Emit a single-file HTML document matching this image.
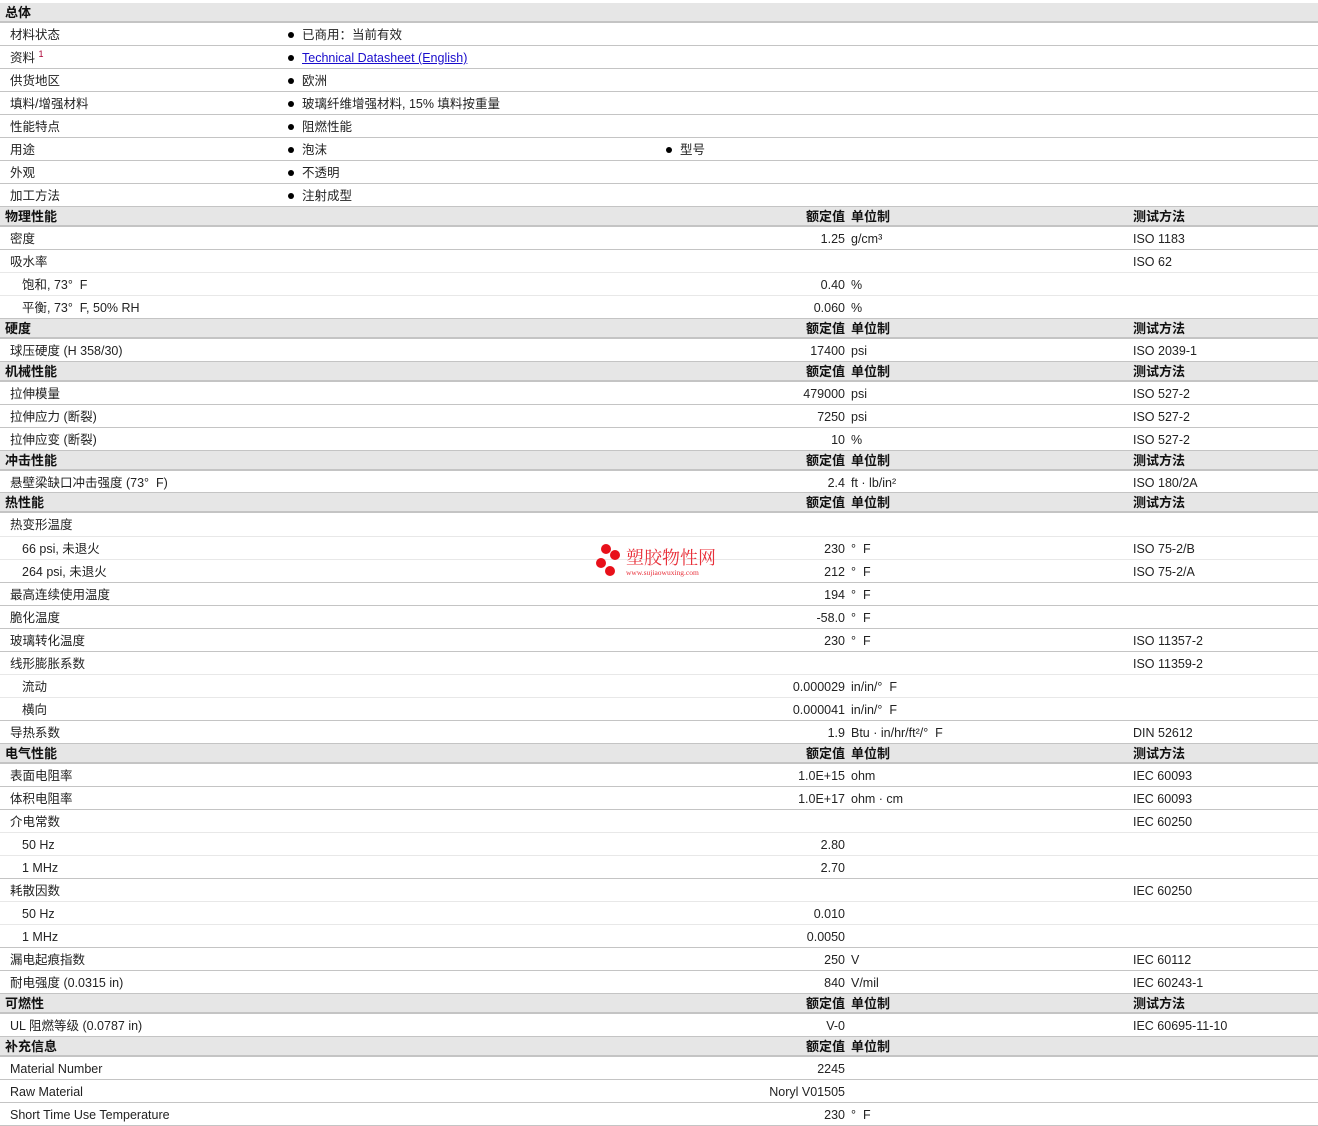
<!DOCTYPE html>
<html><head><meta charset="utf-8"><style>
*{margin:0;padding:0;box-sizing:border-box}
body{width:1318px;height:1126px;background:#fff;position:relative;overflow:hidden;font-family:"Liberation Sans","Noto Sans CJK SC",sans-serif;font-size:12.5px;color:#222}
.r{position:absolute;left:0;width:1318px;height:23px;border-bottom:1px solid #c4c4c4}
.r.s{border-bottom-color:#e8e8e8}
.h{position:absolute;left:0;width:1318px;height:20px;background:#e6e6e6;border-bottom:2px solid #c4c4c4;font-weight:bold;font-size:13px;color:#111}
.r span,.h span{position:absolute;top:5px;white-space:nowrap;line-height:15px;height:15px}
.h span{top:2px;line-height:16px;height:16px}
.l{left:10px}.i{left:22px}.h .l{left:5px}
.v{right:473px;text-align:right}
.u{left:851px}.t{left:1133px}
.b{left:302px}.b2{left:680px}
.d{position:absolute;width:6px;height:6px;border-radius:50%;background:#000;top:9px}
a{color:#1a0dcc;text-decoration:underline}
sup{font-size:9px;color:#a03;line-height:0}
.wm{position:absolute;left:596px;top:544px}
.wm i{position:absolute;width:10px;height:10px;border-radius:50%;background:#e8101a}
</style></head><body>
<div class="h" style="top:3px"><span class="l">总体</span></div>
<div class="r" style="top:23px"><span class="l">材料状态</span><i class="d" style="left:288px"></i><span class="b">已商用：当前有效</span></div>
<div class="r" style="top:46px"><span class="l">资料 <sup>1</sup></span><i class="d" style="left:288px"></i><span class="b"><a>Technical Datasheet (English)</a></span></div>
<div class="r" style="top:69px"><span class="l">供货地区</span><i class="d" style="left:288px"></i><span class="b">欧洲</span></div>
<div class="r" style="top:92px"><span class="l">填料/增强材料</span><i class="d" style="left:288px"></i><span class="b">玻璃纤维增强材料, 15% 填料按重量</span></div>
<div class="r" style="top:115px"><span class="l">性能特点</span><i class="d" style="left:288px"></i><span class="b">阻燃性能</span></div>
<div class="r" style="top:138px"><span class="l">用途</span><i class="d" style="left:288px"></i><span class="b">泡沫</span><i class="d" style="left:666px"></i><span class="b2">型号</span></div>
<div class="r" style="top:161px"><span class="l">外观</span><i class="d" style="left:288px"></i><span class="b">不透明</span></div>
<div class="r" style="top:184px"><span class="l">加工方法</span><i class="d" style="left:288px"></i><span class="b">注射成型</span></div>

<div class="h" style="top:207px"><span class="l">物理性能</span><span class="v">额定值</span><span class="u">单位制</span><span class="t">测试方法</span></div>
<div class="r" style="top:227px"><span class="l">密度</span><span class="v">1.25</span><span class="u">g/cm³</span><span class="t">ISO 1183</span></div>
<div class="r s" style="top:250px"><span class="l">吸水率</span><span class="t">ISO 62</span></div>
<div class="r s" style="top:273px"><span class="i">饱和, 73°&nbsp; F</span><span class="v">0.40</span><span class="u">%</span></div>
<div class="r" style="top:296px"><span class="i">平衡, 73°&nbsp; F, 50% RH</span><span class="v">0.060</span><span class="u">%</span></div>

<div class="h" style="top:319px"><span class="l">硬度</span><span class="v">额定值</span><span class="u">单位制</span><span class="t">测试方法</span></div>
<div class="r" style="top:339px"><span class="l">球压硬度 (H 358/30)</span><span class="v">17400</span><span class="u">psi</span><span class="t">ISO 2039-1</span></div>

<div class="h" style="top:362px"><span class="l">机械性能</span><span class="v">额定值</span><span class="u">单位制</span><span class="t">测试方法</span></div>
<div class="r" style="top:382px"><span class="l">拉伸模量</span><span class="v">479000</span><span class="u">psi</span><span class="t">ISO 527-2</span></div>
<div class="r" style="top:405px"><span class="l">拉伸应力 (断裂)</span><span class="v">7250</span><span class="u">psi</span><span class="t">ISO 527-2</span></div>
<div class="r" style="top:428px"><span class="l">拉伸应变 (断裂)</span><span class="v">10</span><span class="u">%</span><span class="t">ISO 527-2</span></div>

<div class="h" style="top:451px"><span class="l">冲击性能</span><span class="v">额定值</span><span class="u">单位制</span><span class="t">测试方法</span></div>
<div class="r" style="top:471px;height:22px"><span class="l">悬壁梁缺口冲击强度 (73°&nbsp; F)</span><span class="v">2.4</span><span class="u">ft · lb/in²</span><span class="t">ISO 180/2A</span></div>

<div class="h" style="top:493px"><span class="l">热性能</span><span class="v">额定值</span><span class="u">单位制</span><span class="t">测试方法</span></div>
<div class="r s" style="top:513px;height:24px"><span class="l">热变形温度</span></div>
<div class="r s" style="top:537px"><span class="i">66 psi, 未退火</span><span class="v">230</span><span class="u">°&nbsp; F</span><span class="t">ISO 75-2/B</span></div>
<div class="r" style="top:560px"><span class="i">264 psi, 未退火</span><span class="v">212</span><span class="u">°&nbsp; F</span><span class="t">ISO 75-2/A</span></div>
<div class="r" style="top:583px"><span class="l">最高连续使用温度</span><span class="v">194</span><span class="u">°&nbsp; F</span></div>
<div class="r" style="top:606px"><span class="l">脆化温度</span><span class="v">-58.0</span><span class="u">°&nbsp; F</span></div>
<div class="r" style="top:629px"><span class="l">玻璃转化温度</span><span class="v">230</span><span class="u">°&nbsp; F</span><span class="t">ISO 11357-2</span></div>
<div class="r s" style="top:652px"><span class="l">线形膨胀系数</span><span class="t">ISO 11359-2</span></div>
<div class="r s" style="top:675px"><span class="i">流动</span><span class="v">0.000029</span><span class="u">in/in/°&nbsp; F</span></div>
<div class="r" style="top:698px"><span class="i">横向</span><span class="v">0.000041</span><span class="u">in/in/°&nbsp; F</span></div>
<div class="r" style="top:721px"><span class="l">导热系数</span><span class="v">1.9</span><span class="u">Btu · in/hr/ft²/°&nbsp; F</span><span class="t">DIN 52612</span></div>

<div class="h" style="top:744px"><span class="l">电气性能</span><span class="v">额定值</span><span class="u">单位制</span><span class="t">测试方法</span></div>
<div class="r" style="top:764px"><span class="l">表面电阻率</span><span class="v">1.0E+15</span><span class="u">ohm</span><span class="t">IEC 60093</span></div>
<div class="r" style="top:787px"><span class="l">体积电阻率</span><span class="v">1.0E+17</span><span class="u">ohm · cm</span><span class="t">IEC 60093</span></div>
<div class="r s" style="top:810px"><span class="l">介电常数</span><span class="t">IEC 60250</span></div>
<div class="r s" style="top:833px"><span class="i">50 Hz</span><span class="v">2.80</span></div>
<div class="r" style="top:856px"><span class="i">1 MHz</span><span class="v">2.70</span></div>
<div class="r s" style="top:879px"><span class="l">耗散因数</span><span class="t">IEC 60250</span></div>
<div class="r s" style="top:902px"><span class="i">50 Hz</span><span class="v">0.010</span></div>
<div class="r" style="top:925px"><span class="i">1 MHz</span><span class="v">0.0050</span></div>
<div class="r" style="top:948px"><span class="l">漏电起痕指数</span><span class="v">250</span><span class="u">V</span><span class="t">IEC 60112</span></div>
<div class="r" style="top:971px"><span class="l">耐电强度 (0.0315 in)</span><span class="v">840</span><span class="u">V/mil</span><span class="t">IEC 60243-1</span></div>

<div class="h" style="top:994px"><span class="l">可燃性</span><span class="v">额定值</span><span class="u">单位制</span><span class="t">测试方法</span></div>
<div class="r" style="top:1014px"><span class="l">UL 阻燃等级 (0.0787 in)</span><span class="v">V-0</span><span class="t">IEC 60695-11-10</span></div>

<div class="h" style="top:1037px"><span class="l">补充信息</span><span class="v">额定值</span><span class="u">单位制</span></div>
<div class="r" style="top:1057px"><span class="l">Material Number</span><span class="v">2245</span></div>
<div class="r" style="top:1080px"><span class="l">Raw Material</span><span class="v">Noryl V01505</span></div>
<div class="r" style="top:1103px"><span class="l">Short Time Use Temperature</span><span class="v">230</span><span class="u">°&nbsp; F</span></div>

<div class="wm">
<i style="left:5px;top:0"></i><i style="left:14px;top:6px"></i><i style="left:0;top:14px"></i><i style="left:9px;top:22px"></i>
<span style="position:absolute;left:30px;top:3px;font-size:18px;line-height:20px;color:#e8303a;white-space:nowrap;font-family:'Noto Serif CJK SC',serif">塑胶物性网</span>
<span style="position:absolute;left:30px;top:25px;font-size:7.5px;line-height:8px;color:#e8303a;white-space:nowrap;font-family:'Liberation Serif',serif">www.sujiaowuxing.com</span>
</div>
</body></html>
